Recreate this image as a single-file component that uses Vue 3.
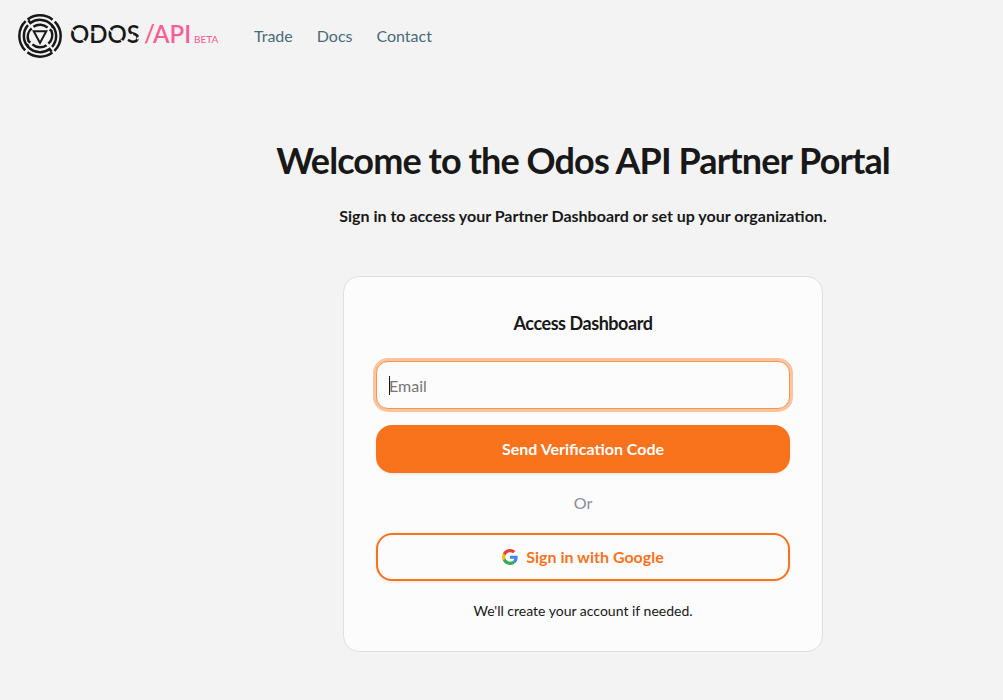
<script setup>
import { ref, onMounted } from "vue";

const email = ref("");
const emailInput = ref(null);
const focused = ref(false);

const links = [
  { label: "Trade", href: "#trade" },
  { label: "Docs", href: "#docs" },
  { label: "Contact", href: "#contact" },
];

onMounted(() => {
  emailInput.value.focus();
});
</script>

<template>
  <div class="page">
    <header class="header">
      <a class="brand" href="#" aria-label="Odos API beta">
        <svg class="brand-mark" viewBox="-22 -22 44 44" fill="none" stroke="#181818" stroke-width="2.5">
          <!-- each half of the maze is the other one turned by 180 degrees -->
          <g v-for="turn in [0, 180]" :key="turn" :transform="`rotate(${turn})`">
            <path d="M-14.8 14.4A20.6 20.6 0 0 1 -14.4 -14.8" />
            <path d="M-12.4 -16.5A20.6 20.6 0 0 1 12.6 -16.3" />
            <path d="M-11.6 -15.8L-9.6 -13A16.1 16.1 0 0 1 11.6 -11.2L13.2 -8.2" />
            <path d="M-11.6 11.2A16.1 16.1 0 0 1 -12 -10.8" />
            <path d="M-9.6 6.5L-11.4 5.2A11.3 11.3 0 0 1 -8.4 -7.6" />
            <path d="M-6.6 -9.2A11.3 11.3 0 0 1 7.6 -8.4" />
          </g>
          <path d="M-6.3 -4.8H6.3L0 6.9Z" stroke-width="2" />
        </svg>
        <svg class="wordmark" width="152" height="44" viewBox="0 0 152 44">
          <text x="0" y="29" class="word">ODOS</text>
          <!-- stencil cuts through the letters -->
          <g stroke="#f3f3f3" stroke-width="1.6">
            <path d="M2 15L6 19M13 26L17 30M19 18H25M35 26L39 30M39 15L43 19M51 26L55 30M59 23L63 20M67 25L71 22" />
          </g>
          <text x="74" y="29" class="word pink">/</text>
          <text x="83" y="29" class="word pink">API</text>
          <text x="124" y="29" class="beta">BETA</text>
        </svg>
      </a>
      <nav class="nav">
        <a v-for="link in links" :key="link.label" :href="link.href">{{ link.label }}</a>
      </nav>
    </header>

    <main class="main">
      <h1>Welcome to the Odos API Partner Portal</h1>
      <p class="lead">Sign in to access your Partner Dashboard or set up your organization.</p>

      <form class="card" @submit.prevent>
        <h2>Access Dashboard</h2>
        <div class="field">
          <input
            ref="emailInput"
            v-model="email"
            type="email"
            aria-label="Email"
            placeholder="Email"
            :class="{ empty: !email }"
            @focus="focused = true"
            @blur="focused = false"
          />
          <span v-if="focused && !email" class="caret"></span>
        </div>
        <button type="submit" class="btn primary">Send Verification Code</button>
        <p class="or">Or</p>
        <button type="button" class="btn outline">
          <svg width="16" height="16" viewBox="0 0 48 48" aria-hidden="true">
            <path fill="#EA4335" d="M24 9.5c3.54 0 6.71 1.22 9.21 3.6l6.85-6.85C35.9 2.38 30.47 0 24 0 14.62 0 6.51 5.38 2.56 13.22l7.98 6.19C12.43 13.72 17.74 9.5 24 9.5z" />
            <path fill="#4285F4" d="M46.98 24.55c0-1.57-.15-3.09-.38-4.55H24v9.02h12.94c-.58 2.96-2.26 5.48-4.78 7.18l7.73 6c4.51-4.18 7.09-10.36 7.09-17.65z" />
            <path fill="#FBBC05" d="M10.53 28.59c-.48-1.45-.76-2.99-.76-4.59s.27-3.14.76-4.59l-7.98-6.19C.92 16.46 0 20.12 0 24c0 3.88.92 7.54 2.56 10.78l7.97-6.19z" />
            <path fill="#34A853" d="M24 48c6.48 0 11.93-2.13 15.89-5.81l-7.73-6c-2.15 1.45-4.92 2.3-8.16 2.3-6.26 0-11.57-4.22-13.47-9.91l-7.98 6.19C6.51 42.62 14.62 48 24 48z" />
          </svg>
          Sign in with Google
        </button>
        <p class="note">We'll create your account if needed.</p>
      </form>
    </main>
  </div>
</template>

<style>
body {
  margin: 0;
  background: #f3f3f3;
}
</style>

<style scoped>
.page {
  min-height: 100vh;
  box-sizing: border-box;
  background: #f3f3f3;
  color: #181818;
  font-family: Lato, sans-serif;
  font-size: 16px;
  line-height: 24px;
}

.header {
  display: flex;
  align-items: center;
  gap: 32px;
  height: 72px;
  padding: 0 18px;
}

.brand {
  display: flex;
  align-items: center;
  gap: 8px;
}

.brand-mark {
  width: 44px;
  height: 44px;
}

.wordmark {
  display: block;
}

.word {
  font-size: 24px;
  font-weight: 600;
  fill: #181818;
}

.pink {
  fill: #f85f96;
}

.beta {
  font-size: 10px;
  font-weight: 500;
  fill: #f85f96;
}

.nav {
  display: flex;
  gap: 24px;
}

.nav a {
  color: #476b7a;
  text-decoration: none;
}

.main {
  display: flex;
  flex-direction: column;
  align-items: center;
  margin-left: 163px;
  padding-top: 68px;
}

h1 {
  margin: 0 0 24px;
  font-size: 36px;
  font-weight: 700;
  line-height: 40px;
  letter-spacing: -0.025em;
}

p {
  margin: 0;
}

.lead {
  font-weight: 700;
}

.card {
  display: flex;
  flex-direction: column;
  box-sizing: border-box;
  width: 100%;
  max-width: 480px;
  margin-top: 48px;
  padding: 32px;
  border: 1px solid #dfdfdf;
  border-radius: 16px;
  background: #fcfcfc;
  text-align: center;
}

h2 {
  margin: 0 0 24px;
  font-size: 18px;
  font-weight: 700;
  line-height: 28px;
  letter-spacing: -0.025em;
}

.field {
  position: relative;
  margin-bottom: 16px;
}

input {
  display: block;
  box-sizing: border-box;
  width: 100%;
  height: 48px;
  padding: 0 12px;
  border: 1px solid #d4d4d4;
  border-radius: 12px;
  outline: none;
  background: #fcfcfc;
  color: #181818;
  font: inherit;
}

input.empty {
  caret-color: transparent;
}

input::placeholder {
  color: #757575;
}

input:focus {
  border-color: #f9944d;
  box-shadow: 0 0 0 3px #fbc3a0;
}

.caret {
  position: absolute;
  top: 15px;
  left: 13px;
  width: 1px;
  height: 19px;
  background: #181818;
}

.btn {
  display: flex;
  align-items: center;
  justify-content: center;
  gap: 8px;
  height: 48px;
  border: 2px solid #f9731c;
  border-radius: 16px;
  box-shadow: 0 1px 3px rgba(0, 0, 0, 0.1);
  font: inherit;
  font-weight: 700;
  cursor: pointer;
}

.primary {
  background: #f9731c;
  color: #fcfcfc;
}

.outline {
  background: #fcfcfc;
  color: #f9731c;
}

.or {
  margin: 18px 0;
  color: #8b8b9a;
}

.note {
  margin-top: 22px;
  font-size: 14px;
  line-height: 16px;
}
</style>
